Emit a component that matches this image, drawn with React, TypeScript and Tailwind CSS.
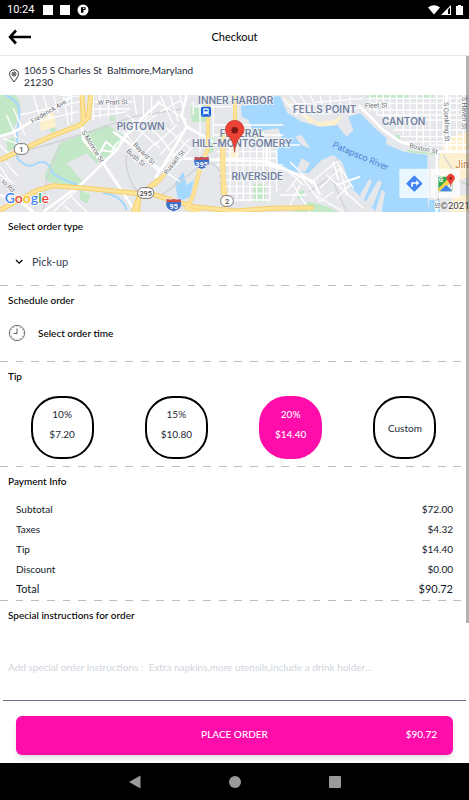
import { useState } from 'react';

const tips = [
  { label: '10%', amount: '$7.20' },
  { label: '15%', amount: '$10.80' },
  { label: '20%', amount: '$14.40' },
  { label: 'Custom', amount: '' },
];

const payments = [
  { label: 'Subtotal', value: '$72.00' },
  { label: 'Taxes', value: '$4.32' },
  { label: 'Tip', value: '$14.40' },
  { label: 'Discount', value: '$0.00' },
];

// Minor streets of the city grid
const streets = [
  'M100 0L118 60M130 0L150 70M160 0L175 55M190 0L205 90M215 0V80M60 60L240 20M85 85L235 50M175 0L245 5M280 0V75M300 0V70M325 0V65M350 0V60M270 20H400M275 42H390M275 65L380 50',
  'M20 60L50 130M40 40L75 120M0 150L30 180M10 130L60 150M0 215L30 260M15 200L55 245M0 240L40 265M160 350L230 285M190 330L215 350M210 300L260 350',
  'M370 110L440 190M400 90L480 160M420 75L480 125M345 150L400 105L450 60M380 170L440 100M410 200L470 140M380 60L420 90L470 60M400 0L410 60M430 0V70M455 0V60',
  'M470 20L560 75M480 50L545 15M480 0L520 90M510 0L535 80M540 0L550 40M465 150L530 90M480 180L545 110M490 215L570 130M500 240L585 150M465 210L540 260M475 120L530 190M500 100L570 160',
  'M640 90H850M640 120H850M645 150H900M650 170H830M650 190H830M650 210H850M655 235H850M660 255H830M665 275H820M665 295H810M665 315H810',
  'M690 80V310M710 90V310M730 100V320M750 95V320M770 100V320M790 110V320M810 130V320M830 160V290M640 20V130M620 20V180M600 30V170M580 20V60M650 10H700M580 35H700',
  'M850 215L910 270M870 200L935 265M880 270L930 350M900 240L960 320M860 290L900 240M840 300H920M870 330L900 270',
  'M1100 10H1390M1110 25H1390M1120 45H1380M1130 60H1385M1170 75H1385M1180 105H1390M1200 125H1390M1210 140H1385M1290 150H1400',
  'M1110 0V50M1130 0V60M1150 0V70M1170 0V90M1190 0V105M1210 0V120M1230 0V125M1250 0V140M1270 0V150M1290 0V150M1310 0V155M1330 0V160M1350 0V165M1370 0V170M1390 0V170',
  'M930 265L1010 200L1060 280M960 280L1020 220L1040 300M945 300L1030 350M980 240L1090 340M1000 290L960 320M1010 310L1050 270',
  'M850 10L890 60M870 0L920 70M900 0L940 60M930 0L960 60M960 0L970 60M990 0V60M1020 0V50M1050 0V60M860 30L1090 10M880 55L1080 40',
];

const mainRoads = [
  'M0 124L40 112L110 70L210 8',
  'M245 95L250 135L310 205L400 340',
  'M130 350L250 262L350 165L375 125L410 85L480 20',
  'M340 110L400 155L480 230',
  'M0 300L60 320L100 350',
  'M465 250L510 180L560 95L545 60L560 0',
  'M560 95L640 140M545 190L800 200L860 225L940 260L960 300',
  'M1075 30L1150 105L1200 140L1300 170L1407 170',
  'M800 130V210L850 220',
  'M1340 0V175M1310 175V350',
];

const highways = [
  'M0 345L110 287L160 272L260 280L400 294L465 300L580 335L700 348L820 340L940 338',
  'M246 0L250 75M272 0L265 68L240 90L150 125L0 195',
  'M400 350L420 300L480 252M412 350L416 310',
];

const ramps = [
  'M624 0V160L600 220L580 300L560 340L600 350',
  'M705 0V90L670 120V240L680 350',
  'M665 130L670 300M465 270L500 230',
];

function InterstateShield({ x, y, label }: { x: number; y: number; label: string }) {
  return (
    <g transform={`translate(${x} ${y})`}>
      <path d="M-20 -19Q-10 -14 0 -19Q10 -14 20 -19Q28 -2 20 10Q12 17 0 20Q-12 17 -20 10Q-28 -2 -20 -19Z" fill="#3f6fc4" stroke="#fff" strokeWidth="2" />
      <path d="M-20 -18Q-10 -13 0 -18Q10 -13 20 -18L22 -9H-22Z" fill="#d84b45" />
      <text y="12" textAnchor="middle" fontSize="22" fontWeight="700" fill="#fff">{label}</text>
    </g>
  );
}

function RouteBadge({ x, y, width, label }: { x: number; y: number; width: number; label: string }) {
  return (
    <g transform={`translate(${x} ${y})`}>
      <rect x={-width / 2} y="-16" width={width} height="32" rx="15" fill="#fff" stroke="#757575" strokeWidth="3" />
      <text y="8" textAnchor="middle" fontSize="22" fontWeight="500" fill="#4a4a4a">{label}</text>
    </g>
  );
}

function StoreMap() {
  return (
    <svg viewBox="0 0 1407 351" preserveAspectRatio="xMidYMid slice" className="block h-[117px] w-full font-[Roboto,sans-serif]" role="img" aria-label="Store location map">
      <rect width="1407" height="351" fill="#e6e7ea" />

      {/* Parks */}
      <g fill="#c3e8c8">
        <path d="M0 0H48L62 30L50 80L30 120L0 124Z" />
        <path d="M178 145L240 120L320 88L375 125L350 165L290 205L260 175L200 205L250 262L230 275L150 262L132 245L165 175Z" />
        <path d="M240 285L272 300L262 325L240 315ZM20 135L42 125L45 160L22 170ZM330 60L345 65V78H330ZM150 100L168 96L166 110L150 112Z" />
        <path d="M572 35L620 30V80L575 82ZM620 130L645 125L640 170L622 175ZM745 110L790 106V130H748Z" />
        <path d="M760 268H796V320H760ZM895 290L912 285L908 310L892 312ZM927 320L985 335L1015 351H880L900 335Z" />
        <path d="M1100 0H1230V8H1100ZM1260 0H1300V8H1260ZM1185 120H1200V132H1185ZM1225 165L1310 175V180L1215 172Z" />
      </g>

      {/* Commercial blocks */}
      <g fill="#fdf0cf">
        <path d="M118 65L160 40L168 95L122 108Z" />
        <path d="M845 0L905 60L930 85L1000 75L1030 60L1000 100L960 120L930 140L950 80Z" />
        <path d="M1320 175L1350 125L1407 110V245L1340 270L1315 220ZM1360 300H1407V351H1350Z" />
        <path d="M690 150H715V200H690Z" />
      </g>

      {/* Water */}
      <g fill="#a5d8ff">
        <path d="M723 32L810 26L820 5L840 2L862 55L905 80L960 95L1020 90L1045 104L1045 65L1080 55L1125 100L1160 130L1158 148L1215 172L1282 180L1284 351H1130L1055 280L1025 200L1000 180L965 195L925 235L885 230L835 212L826 155L850 140L835 100L760 110L745 75L725 65Z" />
        <path d="M550 230L560 270L582 255L570 305L535 320L525 265Z" />
        <path d="M1288 315H1320V351H1284Z" />
      </g>
      <path d="M15 0Q65 20 58 65Q45 130 52 190Q85 225 110 205Q145 190 158 235Q205 265 255 275M310 295Q365 300 380 345" fill="none" stroke="#a5d8ff" strokeWidth="6" />

      {/* Piers */}
      <g fill="#e6e7ea">
        <path d="M1020 75L1045 65L1060 105L1040 125L1015 95ZM1080 300L1108 252L1116 258L1090 318ZM1095 325L1135 255L1146 262L1118 335ZM1125 351L1145 285L1155 290L1145 351Z" />
        <path d="M885 125L905 120L930 160L905 150ZM890 225L905 190L930 205L915 230Z" />
      </g>

      {/* Railways */}
      <g fill="none" stroke="#d0d2d6" strokeWidth="4">
        <path d="M0 190L190 135L300 100L400 65L560 40M180 150L140 250L130 351M420 300Q370 240 380 180M470 310Q560 250 600 210Q650 190 660 240L670 351" />
        <path d="M927 290L1000 240L1010 190M1040 351L1000 260M1330 180L1380 260L1407 270" />
      </g>

      <g fill="none" stroke="#fff" strokeWidth="4">
        {streets.map((d) => <path key={d} d={d} />)}
      </g>
      <g fill="none" stroke="#fff" strokeWidth="8" strokeLinejoin="round">
        {mainRoads.map((d) => <path key={d} d={d} />)}
      </g>
      <path d="M290 190L318 140L350 165M300 165L335 170L350 145M1000 200L1015 255M1010 270L1080 245" fill="none" stroke="#fff" strokeWidth="6" />
      <g fill="none" stroke="#f6cf65" strokeWidth="15" strokeLinejoin="round">
        {highways.map((d) => <path key={d} d={d} />)}
      </g>
      <g fill="none" stroke="#f6cf65" strokeWidth="12" strokeLinejoin="round">
        {ramps.map((d) => <path key={d} d={d} />)}
      </g>
      <g fill="none" stroke="#fee39a" strokeWidth="9" strokeLinejoin="round">
        {[...highways, ...ramps].map((d) => <path key={d} d={d} />)}
      </g>

      {/* Neighbourhood names */}
      <g fill="#71809f" stroke="#f4f5f7" strokeWidth="4" paintOrder="stroke" fontSize="30" fontWeight="600" textAnchor="middle" className="font-[Inter,sans-serif]">
        <text x="707" y="27">INNER HARBOR</text>
        <text x="974" y="54">FELLS POINT</text>
        <text x="422" y="106">PIGTOWN</text>
        <text x="1211" y="89">CANTON</text>
        <text x="726" y="127">FEDERAL</text>
        <text x="726" y="156">HILL-MONTGOMERY</text>
        <text x="772" y="254">RIVERSIDE</text>
      </g>

      {/* Street names */}
      <g fill="#666a70" stroke="#fff" strokeWidth="4" paintOrder="stroke" fontSize="20">
        <text x="294" y="30" transform="rotate(-2 294 30)">W Pratt St</text>
        <text x="98" y="86" transform="rotate(-31 98 86)">Frederick Ave</text>
        <text x="244" y="112" transform="rotate(58 244 112)">S Monroe St</text>
        <text x="398" y="150" transform="rotate(46 398 150)">Bayard St</text>
        <text x="378" y="170" transform="rotate(42 378 170)">Bush St</text>
        <text x="3" y="262" transform="rotate(43 3 262)">to Rd</text>
        <text x="500" y="240" transform="rotate(-51 500 240)">Russell St</text>
        <text x="1095" y="39" transform="rotate(-2 1095 39)">Fleet St</text>
        <text x="1227" y="158" transform="rotate(13 1227 158)">Boston St</text>
        <text x="1331" y="22" transform="rotate(88 1331 22)">S Conkling St</text>
        <text x="1386" y="6" transform="rotate(90 1386 6)">S Haven St</text>
        <text x="1306" y="238" transform="rotate(90 1306 238)">S Clinton St</text>
      </g>
      <text x="995" y="156" transform="rotate(23 995 156)" fontSize="27" fill="#4c83d3">Patapsco River</text>
      <text x="1366" y="218" fontSize="30" fill="#c77b26" stroke="#fff" strokeWidth="4" paintOrder="stroke">Jin</text>

      <RouteBadge x={64} y={162} width={42} label="1" />
      <RouteBadge x={437} y={294} width={48} label="295" />
      <RouteBadge x={681} y={318} width={38} label="2" />
      <InterstateShield x={605} y={203} label="395" />
      <InterstateShield x={521} y={330} label="95" />

      {/* Transit stop */}
      <rect x="603" y="35" width="30" height="30" rx="5" fill="#1765dc" />
      <path d="M611 41H625V56H611ZM611 57L608 61M625 57L628 61" fill="#fff" stroke="#fff" strokeWidth="2" />
      <path d="M613 44H623V49H613Z" fill="#1765dc" />

      {/* Store marker */}
      <path d="M704 172Q702 143 688 127Q676 115 676 104A28 28 0 0 1 732 104Q732 115 720 127Q706 143 704 172Z" fill="#ea4335" stroke="#c5332b" strokeWidth="2" />
      <circle cx="704" cy="106" r="10" fill="#7c1712" />

      {/* Map shortcuts */}
      <rect x="1198" y="221" width="182" height="88" rx="4" fill="#fff" fillOpacity="0.78" />
      <path d="M1289 221V309" stroke="#d5dbe1" strokeWidth="2" />
      <path d="M1243 245L1264 266L1243 287L1222 266Z" fill="#4285f4" stroke="#4285f4" strokeWidth="6" strokeLinejoin="round" />
      <path d="M1236 275V264H1252" fill="none" stroke="#fff" strokeWidth="5" />
      <path d="M1249 255L1258 264L1249 273Z" fill="#fff" />
      <rect x="1315" y="245" width="42" height="44" rx="3" fill="#34a853" />
      <path d="M1315 281L1348 247L1357 256L1326 289L1315 287Z" fill="#ffd34d" />
      <path d="M1319 289L1338 270L1356 289Z" fill="#4285f4" />
      <path d="M1341 272L1357 257V288Z" fill="#e0e3e7" />
      <text x="1316" y="261" fontSize="19" fontWeight="700" fill="#fff">G</text>
      <path d="M1352 276Q1350 264 1343 257A12 12 0 1 1 1361 257Q1354 264 1352 276Z" fill="#ea4335" />
      <circle cx="1352" cy="250" r="4" fill="#8c1d17" />

      <text x="14" y="324" fontSize="42" fontWeight="600" stroke="#fff" strokeWidth="5" paintOrder="stroke" className="font-[Lato,sans-serif]">
        <tspan fill="#4285f4">G</tspan>
        <tspan fill="#ea4335">o</tspan>
        <tspan fill="#fbbc04">o</tspan>
        <tspan fill="#4285f4">g</tspan>
        <tspan fill="#34a853">l</tspan>
        <tspan fill="#ea4335">e</tspan>
      </text>
      <text x="1321" y="342" fontSize="29" fill="#3c3c3c" stroke="#fff" strokeWidth="3" paintOrder="stroke">©2021</text>
    </svg>
  );
}

function StatusBar() {
  return (
    <div className="flex h-[19px] items-center justify-between bg-black px-[5px] text-white">
      <div className="flex items-center gap-[7px]">
        <span className="mr-0.5 pl-0.5 font-[Roboto,sans-serif] text-[11px]">10:24</span>
        <span className="size-2.5 bg-white"></span>
        <span className="size-2.5 bg-white"></span>
        <svg viewBox="0 0 12 12" className="size-3">
          <circle cx="6" cy="6" r="5.5" fill="#fff" />
          <path d="M4 3.2H8.6V6H6.5V8.8H4Z" fill="#000" />
          <path d="M6 4.4H7.4" stroke="#fff" />
        </svg>
      </div>
      <svg viewBox="0 0 36 12" className="h-3 w-9">
        <path d="M0 3.5Q6 -1 12 3.5L6 10.5Z" fill="#fff" />
        <path d="M23 1V11H13Z" fill="#fff" />
        <path d="M20 5.5V10H22V3.5Z" fill="#000" />
        <path d="M28 2H30V1H33V2H35V11H28Z" fill="#fff" />
      </svg>
    </div>
  );
}

function Divider() {
  return (
    <div className="h-px w-full bg-[repeating-linear-gradient(90deg,#bdbdbd_0_1.667%,transparent_1.667%_3.333%)]"></div>
  );
}

function ClockIcon() {
  return (
    <svg viewBox="0 0 18 18" className="size-[18px]" fill="none" stroke="#333">
      <circle cx="9" cy="9" r="7.7" strokeWidth="0.7" />
      <path d="M9 4.5V9.5H5.5" strokeWidth="0.8" />
      <path d="M9 2.2V3.2M9 14.8V15.8M2.2 9H3.2M14.8 9H15.8M5.6 3.1L6 4M12.4 3.1L12 4M3.1 5.6L4 6M14.9 5.6L14 6M3.1 12.4L4 12M14.9 12.4L14 12M5.6 14.9L6 14M12.4 14.9L12 14" strokeWidth="0.5" />
    </svg>
  );
}

export default function App() {
  const [selectedTip, setSelectedTip] = useState('20%');

  return (
    <div className="flex min-h-screen flex-col bg-white font-[Lato,sans-serif] text-[10px] leading-3 text-black">
      <StatusBar />

      {/* Header */}
      <header className="grid h-[37px] grid-cols-[1fr_auto_1fr] items-center border-b border-gray-200 px-2">
        <button type="button" aria-label="Back" className="justify-self-start">
          <svg viewBox="0 0 24 16" className="h-4 w-6" fill="none" stroke="#000" strokeWidth="2.6">
            <path d="M1.5 8H23M8 1.5L2 8L8 14.5" />
          </svg>
        </button>
        <h1 className="text-[11px]">Checkout</h1>
      </header>

      <main className="relative flex flex-1 flex-col">
        {/* Scroll indicator */}
        <div className="absolute top-0 right-0 h-[567px] w-[3px] bg-black/30"></div>

        <div className="flex h-[39px] items-center gap-1 px-2">
          <svg viewBox="0 0 12 14" className="h-3.5 w-3" fill="none" stroke="#222" strokeWidth="0.9">
            <path d="M6 13L2.5 8Q1.5 6.5 1.5 5A4.5 4.3 0 0 1 10.5 5Q10.5 6.5 9.5 8Z" />
            <circle cx="6" cy="5" r="2" />
            <circle cx="6" cy="5" r="0.6" />
          </svg>
          <address className="whitespace-pre-line text-gray-800 not-italic">
            1065 S Charles St &nbsp;Baltimore,Maryland{'\n'}21230
          </address>
        </div>

        <StoreMap />

        {/* Order type */}
        <section className="h-[73px] px-2 pt-2">
          <label htmlFor="order-type" className="block font-medium">Select order type</label>
          <div className="mt-3.5 flex h-6 items-center gap-1 pt-2 pl-1.5">
            <svg viewBox="0 0 10 10" className="size-2.5" fill="none" stroke="#000" strokeWidth="1.3">
              <path d="M2 3L5.2 6.2L8.4 3" />
            </svg>
            <select id="order-type" className="appearance-none bg-transparent pl-1 text-[11px] text-gray-700 outline-none">
              <option>Pick-up</option>
            </select>
          </div>
        </section>
        <Divider />

        {/* Schedule */}
        <section className="h-[75px] px-2 pt-2">
          <h2 className="font-medium">Schedule order</h2>
          <button type="button" className="mt-[18px] flex items-center gap-3 font-medium">
            <ClockIcon />
            Select order time
          </button>
        </section>
        <Divider />

        {/* Tip */}
        <section className="h-[104px] pt-2">
          <h2 className="px-2 font-medium">Tip</h2>
          <div className="mt-3.5 flex justify-around pr-[7px] pl-[5px]">
            {tips.map((tip) => (
              <button
                key={tip.label}
                type="button"
                aria-pressed={selectedTip === tip.label}
                onClick={() => setSelectedTip(tip.label)}
                className={`flex size-[63px] flex-col items-center justify-center gap-2 rounded-[28px] border-2 ${
                  tip.amount ? 'pb-2' : ''
                } ${
                  selectedTip === tip.label
                    ? 'border-[#ff0daa] bg-[#ff0daa] font-medium text-white'
                    : 'border-black bg-white text-gray-800'
                }`}
              >
                <span>{tip.label}</span>
                {tip.amount && <span>{tip.amount}</span>}
              </button>
            ))}
          </div>
        </section>
        <Divider />

        {/* Payment */}
        <section className="h-[133px] px-2 pt-2">
          <h2 className="font-medium">Payment Info</h2>
          <dl className="mt-3 px-2 text-gray-900">
            {payments.map((row) => (
              <div key={row.label} className="flex h-5 items-center justify-between">
                <dt>{row.label}</dt>
                <dd>{row.value}</dd>
              </div>
            ))}
            <div className="flex h-5 items-center justify-between text-[11px]">
              <dt>Total</dt>
              <dd>$90.72</dd>
            </div>
          </dl>
        </section>
        <Divider />

        {/* Instructions */}
        <section className="px-[3px] pt-2">
          <label htmlFor="instructions" className="block px-[5px] font-medium">Special instructions for order</label>
          <input
            id="instructions"
            type="text"
            placeholder="Add special order instructions :  Extra napkins,more utensils,include a drink holder..."
            className="mt-3 h-[68px] w-full border-b border-gray-500 px-[5px] outline-none placeholder:text-gray-300"
          />
        </section>

        <div className="px-4 pt-[15px] pb-2">
          <button type="button" className="grid h-[39px] w-full grid-cols-[1fr_auto_1fr] items-center rounded-md bg-[#ff0daa] px-4 pb-1 font-medium text-white shadow-md">
            <span className="col-start-2">PLACE ORDER</span>
            <span className="justify-self-end">$90.72</span>
          </button>
        </div>
      </main>

      {/* Android navigation */}
      <nav className="flex h-[37px] items-center justify-center gap-[88px] bg-black">
        <button type="button" aria-label="Back">
          <svg viewBox="0 0 12 14" className="h-3.5 w-3" fill="#9a9a9a"><path d="M0 7L11.5 0.5V13.5Z" /></svg>
        </button>
        <button type="button" aria-label="Home" className="size-3 rounded-full bg-[#9a9a9a]"></button>
        <button type="button" aria-label="Recent apps" className="size-3 rounded-[1px] bg-[#9a9a9a]"></button>
      </nav>
    </div>
  );
}
